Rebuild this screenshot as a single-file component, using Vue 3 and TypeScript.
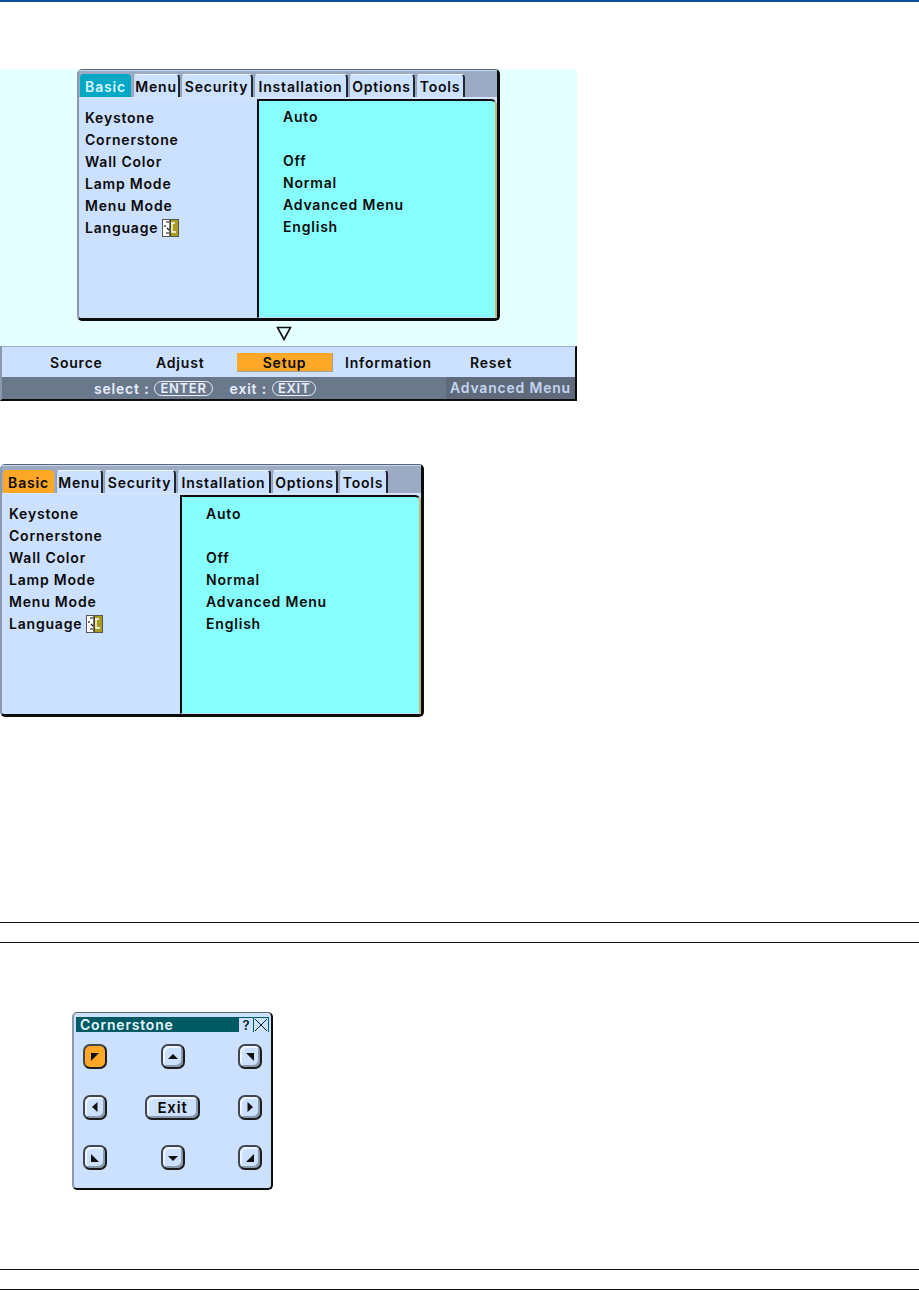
<script setup lang="ts">
interface Tab { label: string; width: number }
const tabs: Tab[] = [
  { label: 'Basic', width: 51 },
  { label: 'Menu', width: 47 },
  { label: 'Security', width: 72 },
  { label: 'Installation', width: 94 },
  { label: 'Options', width: 66 },
  { label: 'Tools', width: 49 },
]
const labels = ['Keystone', 'Cornerstone', 'Wall Color', 'Lamp Mode', 'Menu Mode']
const values = ['Auto', '', 'Off', 'Normal', 'Advanced Menu', 'English']
const menuWindows = [
  { id: 'teal', cls: 'win-teal' },
  { id: 'orange', cls: 'win-orange' },
]
const nav = [
  { label: 'Source', active: false },
  { label: 'Adjust', active: false },
  { label: 'Setup', active: true },
  { label: 'Information', active: false },
  { label: 'Reset', active: false },
]
const pads = [
  { pts: '4,4 12,4 4,12', active: true, wide: false, label: '' },
  { pts: '8,5 13,10 3,10', active: false, wide: false, label: '' },
  { pts: '4,4 12,4 12,12', active: false, wide: false, label: '' },
  { pts: '10.5,3 10.5,13 5,8', active: false, wide: false, label: '' },
  { pts: '', active: false, wide: true, label: 'Exit' },
  { pts: '5.5,3 5.5,13 11,8', active: false, wide: false, label: '' },
  { pts: '4,4 4,12 12,12', active: false, wide: false, label: '' },
  { pts: '3,6 13,6 8,11', active: false, wide: false, label: '' },
  { pts: '12,4 12,12 4,12', active: false, wide: false, label: '' },
]
</script>

<template>
  <main class="page">
    <div class="topbar"></div>

    <section class="band">
      <div class="win" :class="menuWindows[0].cls">
        <div class="tabs">
          <span v-for="t in tabs" :key="t.label" class="tab" :style="{ width: t.width + 'px' }">{{ t.label }}</span>
          <span class="tab-rest"></span>
        </div>
        <div class="body">
          <div class="left">
            <div v-for="l in labels" :key="l" class="row">{{ l }}</div>
            <div class="row">Language
              <svg class="lang" width="17" height="18" viewBox="0 0 17 18">
                <rect x="0.5" y="0.5" width="16" height="17" fill="#fff" stroke="#555" />
                <rect x="8" y="1" width="8" height="16" fill="#a89e1c" />
                <path d="M4 3 L7 3 M3 6 L3 8 M5 9 L7 11 M4 14 L7 14" stroke="#111" stroke-width="1.2" fill="none" />
                <path d="M9 4 H13 M10 4 V13 H14" stroke="#fff" stroke-width="1.4" fill="none" />
                <path d="M8 1 V17" stroke="#111" stroke-width="1.2" />
              </svg>
            </div>
          </div>
          <div class="right">
            <div v-for="(v, i) in values" :key="i" class="row">{{ v }}</div>
          </div>
        </div>
      </div>

      <div class="arrow-row">
        <svg width="16" height="15" viewBox="0 0 16 15">
          <path d="M1.5 1.5 H14.5 L8 13.5 Z" fill="none" stroke="#111" stroke-width="1.6" />
        </svg>
      </div>

      <div class="navbox">
        <div class="nav-top">
          <span v-for="n in nav" :key="n.label" class="nav-item" :class="{ active: n.active }">{{ n.label }}</span>
        </div>
        <div class="nav-bottom">
          <div class="hints">
            <span>select :</span><span class="pill">ENTER</span>
            <span class="hint-gap">exit :</span><span class="pill">EXIT</span>
          </div>
          <div class="mode">Advanced Menu</div>
        </div>
      </div>
    </section>

    <div class="win win-second" :class="menuWindows[1].cls">
      <div class="tabs">
        <span v-for="t in tabs" :key="t.label" class="tab" :style="{ width: t.width + 'px' }">{{ t.label }}</span>
        <span class="tab-rest"></span>
      </div>
      <div class="body">
        <div class="left">
          <div v-for="l in labels" :key="l" class="row">{{ l }}</div>
          <div class="row">Language
            <svg class="lang" width="17" height="18" viewBox="0 0 17 18">
              <rect x="0.5" y="0.5" width="16" height="17" fill="#fff" stroke="#555" />
              <rect x="8" y="1" width="8" height="16" fill="#a89e1c" />
              <path d="M4 3 L7 3 M3 6 L3 8 M5 9 L7 11 M4 14 L7 14" stroke="#111" stroke-width="1.2" fill="none" />
              <path d="M9 4 H13 M10 4 V13 H14" stroke="#fff" stroke-width="1.4" fill="none" />
              <path d="M8 1 V17" stroke="#111" stroke-width="1.2" />
            </svg>
          </div>
        </div>
        <div class="right">
          <div v-for="(v, i) in values" :key="i" class="row">{{ v }}</div>
        </div>
      </div>
    </div>

    <div class="rule-band first"></div>

    <div class="dialog">
      <div class="titlebar">
        <span>Cornerstone</span>
        <span class="title-btns">
          <span class="tbtn">?</span>
          <span class="tbtn">
            <svg width="14" height="14" viewBox="0 0 14 14"><path d="M1 1 L13 13 M13 1 L1 13" stroke="#023" stroke-width="1" /></svg>
          </span>
        </span>
      </div>
      <div class="pad-grid">
        <div v-for="(p, i) in pads" :key="i" class="pad" :class="{ on: p.active, wide: p.wide }">
          <template v-if="p.wide">{{ p.label }}</template>
          <svg v-else width="16" height="16" viewBox="0 0 16 16"><polygon :points="p.pts" fill="#111" /></svg>
        </div>
      </div>
    </div>

    <div class="rule-band last"></div>
  </main>
</template>

<style>
html, body { background: #fff; }
</style>

<style scoped>
.page {
  width: 919px;
  height: 1290px;
  overflow: hidden;
  background: #fff;
  font-family: Inter, "DejaVu Sans", sans-serif;
  font-size: 14px;
  font-weight: 600;
  letter-spacing: 0.8px;
  color: #0a0a0a;
}
.topbar { height: 2px; background: #0b4f9e; }
.band {
  margin-top: 67px;
  width: 577px;
  height: 332px;
  background: #e6ffff;
  padding-left: 77px;
  box-sizing: border-box;
  position: relative;
}
.win {
  box-sizing: border-box;
  width: 423px;
  height: 252px;
  background: #cce0ff;
  border-top: 1px solid #5b6573;
  border-left: 2px solid #8a99ad;
  border-right: 3px solid #0c0c0c;
  border-bottom: 3px solid #0c0c0c;
  border-radius: 5px;
  display: flex;
  flex-direction: column;
}
.win-second { margin-top: 63px; width: 424px; height: 253px; }
.tabs {
  display: flex;
  height: 28px;
  flex: none;
  padding-top: 3px;
  padding-left: 1px;
  box-sizing: border-box;
  background: repeating-conic-gradient(#96a6bf 0 25%, #a1b0c8 0 50%) 0 0 / 2px 2px;
  border-top: 1px solid #c5d6f0;
  border-bottom: 1px solid #dbe8fb;
}
.win-second .tabs { height: 29px; padding-top: 4px; }
.win-second .right { padding-top: 6px; }
.win-second .left { padding-left: 7px; }
.tab {
  box-sizing: border-box;
  flex: none;
  background: #cce0ff;
  border-top: 1px solid #eef5ff;
  border-right: 2px solid #20262e;
  border-left: 1px solid #8fa0b8;
  border-radius: 4px 4px 0 0;
  text-align: center;
  line-height: 23px;
  margin-right: 1px;
}
.tab:first-child { border: none; line-height: 25px; margin-right: 2px; }
.win-teal .tab:first-child { background: #00a8c4; color: #ddf6ff; }
.win-orange .tab:first-child { background: #ffa726; }
.tab-rest { flex: 1; }
.body { flex: 1; display: flex; min-height: 0; }
.left {
  box-sizing: border-box;
  width: 178px;
  flex: none;
  padding: 9px 0 0 6px;
}
.right {
  flex: 1;
  box-sizing: border-box;
  background: #88ffff;
  border-left: 2px solid #0c0c0c;
  border-top: 2px solid #0c0c0c;
  border-right: 2px solid #c6b27e;
  border-bottom: 1px solid #c9dcf8;
  border-top-right-radius: 6px;
  margin: 1px 0 0 0;
  padding: 5px 0 0 24px;
}
.row { height: 22px; line-height: 22px; white-space: nowrap; display: flex; align-items: center; }
.lang { margin-left: 4px; flex: none; }
.arrow-row {
  height: 25px;
  padding-left: 199px;
  padding-top: 5px;
  box-sizing: border-box;
  display: flex;
  align-items: flex-start;
}
.navbox {
  position: absolute;
  left: 0;
  right: 0;
  bottom: 0;
  height: 55px;
  box-sizing: border-box;
  border-top: 1px solid #9fb0c8;
  border-left: 2px solid #8a99ad;
  border-right: 2px solid #0c0c0c;
  border-bottom: 2px solid #0c0c0c;
  display: flex;
  flex-direction: column;
}
.nav-top {
  height: 30px;
  flex: none;
  background: #cce0ff;
  display: grid;
  grid-template-columns: 106px 81px 96px 137px 1fr;
  padding-left: 48px;
  align-items: center;
}
.nav-item { text-align: left; }
.nav-item.active + .nav-item { padding-left: 12px; }
.nav-item.active {
  background: #ffa726;
  height: 19px;
  line-height: 19px;
  text-align: center;
  box-sizing: border-box;
  border-right: 1px solid #a0a0a0;
  border-bottom: 1px solid #a0a0a0;
}
.nav-bottom {
  flex: 1;
  display: flex;
  background: repeating-conic-gradient(#67758a 0 25%, #6e7b8c 0 50%) 0 0 / 2px 2px;
  color: #e6eeff;
}
.hints {
  flex: 1;
  display: flex;
  align-items: center;
  padding-left: 92px;
  gap: 5px;
}
.hint-gap { margin-left: 12px; }
.pill {
  border: 1px solid #e6eeff;
  border-radius: 8px;
  height: 13px;
  line-height: 13px;
  padding: 0 5px;
  font-size: 13px;
  letter-spacing: 0.7px;
}
.mode {
  width: 129px;
  background: #5f6b7b;
  line-height: 22px;
  padding-left: 4px;
  box-sizing: border-box;
  color: #c4d6f2;
}
.rule-band {
  box-sizing: border-box;
  height: 21px;
  border-top: 1px solid #111;
  border-bottom: 1px solid #111;
}
.rule-band.first { margin-top: 205px; }
.rule-band.last { margin-top: 79px; }
.dialog {
  margin: 69px 0 0 72px;
  width: 201px;
  height: 178px;
  box-sizing: border-box;
  background: #cce0ff;
  border-top: 1px solid #5b6573;
  border-left: 2px solid #8a99ad;
  border-right: 2px solid #0c0c0c;
  border-bottom: 2px solid #0c0c0c;
  border-radius: 5px;
  padding: 4px 2px 0;
}
.titlebar {
  height: 15px;
  background: #005a64;
  color: #e4f8ff;
  display: flex;
  justify-content: space-between;
  align-items: center;
  padding-left: 4px;
  line-height: 15px;
}
.title-btns { display: flex; gap: 1px; margin-right: 1px; }
.tbtn {
  width: 14px;
  height: 14px;
  background: #cce0ff;
  color: #023;
  font-size: 13px;
  letter-spacing: 0;
  line-height: 14px;
  text-align: center;
  display: block;
}
.pad-grid {
  display: grid;
  grid-template-columns: 24px 55px 24px;
  grid-template-rows: 25px 25px 25px;
  column-gap: 38px;
  row-gap: 25.5px;
  margin: 12px 0 0 7px;
  justify-items: center;
}
.pad {
  box-sizing: border-box;
  width: 24px;
  height: 25px;
  background: #cce0ff;
  border: 2px solid #1c1c1c;
  border-top-color: #3f4650;
  border-left-color: #3f4650;
  border-radius: 7px;
  box-shadow: inset 2px 2px 0 #eef5ff, inset -2px -2px 0 #8a99ad;
  display: flex;
  align-items: center;
  justify-content: center;
}
.pad.on { background: #ffa726; box-shadow: none; }
.pad.wide { width: 55px; font-size: 15px; }
</style>
